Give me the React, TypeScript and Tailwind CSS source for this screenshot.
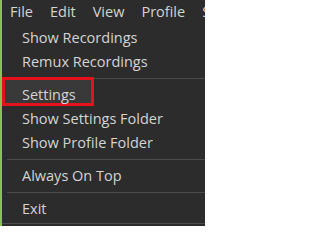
const menus = ["File", "Edit", "View", "Profile", "S"];

type Entry = { label?: string; separator?: boolean; active?: boolean };

const entries: Entry[] = [
  { label: "Show Recordings" },
  { label: "Remux Recordings" },
  { separator: true },
  { label: "Settings", active: true },
  { label: "Show Settings Folder" },
  { label: "Show Profile Folder" },
  { separator: true },
  { label: "Always On Top" },
  { separator: true },
  { label: "Exit" },
];

export default function App() {
  return (
    <div
      className="flex h-[226px] w-[205px] overflow-hidden bg-[#2c2c2c] text-[14.5px] text-[#d4d4d4]"
      style={{ fontFamily: '"Open Sans", "Noto Sans", sans-serif' }}
    >
      <div className="w-[2px] shrink-0 bg-[#8cc152]" />
      <div className="flex min-w-0 flex-1 flex-col">
        {/* menubar */}
        <div className="flex h-[24px] shrink-0 items-center gap-[17px] whitespace-nowrap pl-[8px] leading-[22px]">
          {menus.map((m) => (
            <span key={m} className="shrink-0">
              {m}
            </span>
          ))}
        </div>
        {/* dropdown */}
        <div className="flex flex-col pt-[2px]">
          {entries.map((e, i) =>
            e.separator ? (
              <div key={i} className="flex h-[9px] items-center pl-[5px]">
                <div className="h-px w-full bg-[#4b4b4b]" />
              </div>
            ) : (
              <div
                key={i}
                className="relative h-[24px] whitespace-nowrap pl-[20px] leading-[24px]"
              >
                {e.active && (
                  <div className="absolute -top-[6px] left-0 h-[29px] w-[92px] border-[3px] border-[#e4121b] bg-[#393939]" />
                )}
                <span className="relative">{e.label}</span>
              </div>
            )
          )}
          <div className="mt-[2px] h-px bg-[#4b4b4b]" />
        </div>
      </div>
    </div>
  );
}
